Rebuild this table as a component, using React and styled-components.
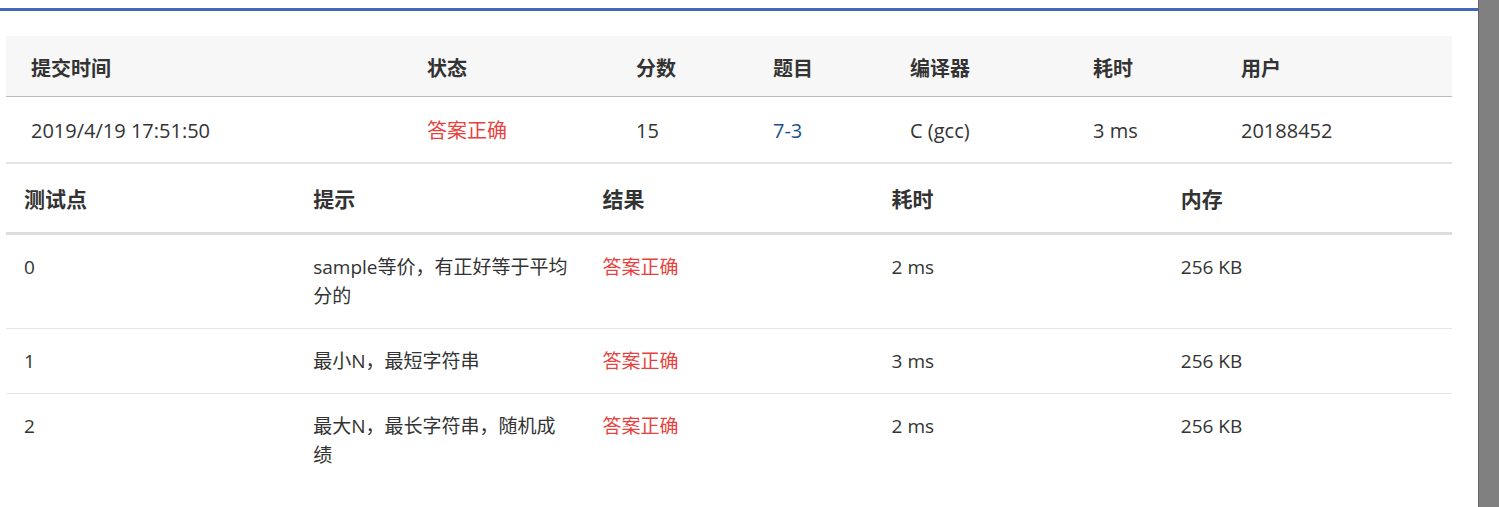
import React from "react";
import styled, { createGlobalStyle } from "styled-components";

const GlobalStyle = createGlobalStyle`
  html, body {
    margin: 0;
    padding: 0;
    background: #fff;
    overflow: hidden;
  }
  body {
    font-family: "Open Sans", "Noto Sans CJK SC", sans-serif;
    color: #333;
  }
`;

const Page = styled.div`
  display: flex;
  height: 507px;
`;

const Main = styled.div`
  flex: 1;
  padding-top: 8px;
`;

const Content = styled.div`
  border-top: 3px solid #4467bb;
  padding: 25px 26px 0 6px;
`;

const ScrollTrack = styled.div`
  width: 20px;
  background: #808080;
  border-left: 1px solid #666;
`;

const SummaryGrid = styled.div`
  display: grid;
  grid-template-columns: 396px 209px 137px 137px 183px 148px 1fr;
  font-size: 20px;
`;

const SummaryHead = styled.div`
  background: #f7f7f7;
  font-weight: 700;
  height: 58px;
  line-height: 62px;
  padding: 2px 0 0 25px;
  border-bottom: 1px solid #bdbdbd;
`;

const SummaryCell = styled.div`
  height: 65px;
  line-height: 68px;
  padding-left: 25px;
  border-bottom: 2px solid #e3e3e3;
  color: ${(p) => p.$color || "#333"};
`;

const CasesGrid = styled.div`
  display: grid;
  grid-template-columns: repeat(5, 1fr);
`;

const CaseHead = styled.div`
  font-size: 21px;
  font-weight: 700;
  height: 68px;
  line-height: 70px;
  padding-left: 18px;
  border-bottom: 3px solid #dedede;
`;

const CaseCell = styled.div`
  font-size: 19px;
  line-height: 29px;
  padding: 18px 14px 17px 18px;
  border-bottom: ${(p) => (p.$last ? "none" : "1px solid #e6e6e6")};
  color: ${(p) => p.$color || "#333"};
`;

const RED = "#e64340";

const summaryCols = ["提交时间", "状态", "分数", "题目", "编译器", "耗时", "用户"];
const summary = [
  { text: "2019/4/19 17:51:50" },
  { text: "答案正确", color: RED },
  { text: "15" },
  { text: "7-3", color: "#1d4f88" },
  { text: "C (gcc)" },
  { text: "3 ms" },
  { text: "20188452" },
];

const caseCols = ["测试点", "提示", "结果", "耗时", "内存"];
const cases = [
  ["0", "sample等价，有正好等于平均分的", "答案正确", "2 ms", "256 KB"],
  ["1", "最小N，最短字符串", "答案正确", "3 ms", "256 KB"],
  ["2", "最大N，最长字符串，随机成绩", "答案正确", "2 ms", "256 KB"],
];

export default function App() {
  return (
    <Page>
      <GlobalStyle />
      <Main>
        <Content>
          <SummaryGrid>
            {summaryCols.map((c) => (
              <SummaryHead key={c}>{c}</SummaryHead>
            ))}
            {summary.map((s, i) => (
              <SummaryCell key={i} $color={s.color}>
                {s.text}
              </SummaryCell>
            ))}
          </SummaryGrid>
          <CasesGrid>
            {caseCols.map((c) => (
              <CaseHead key={c}>{c}</CaseHead>
            ))}
            {cases.map((row, r) =>
              row.map((v, i) => (
                <CaseCell
                  key={r + "-" + i}
                  $last={r === cases.length - 1}
                  $color={i === 2 ? RED : undefined}
                >
                  {v}
                </CaseCell>
              ))
            )}
          </CasesGrid>
        </Content>
      </Main>
      <ScrollTrack />
    </Page>
  );
}
